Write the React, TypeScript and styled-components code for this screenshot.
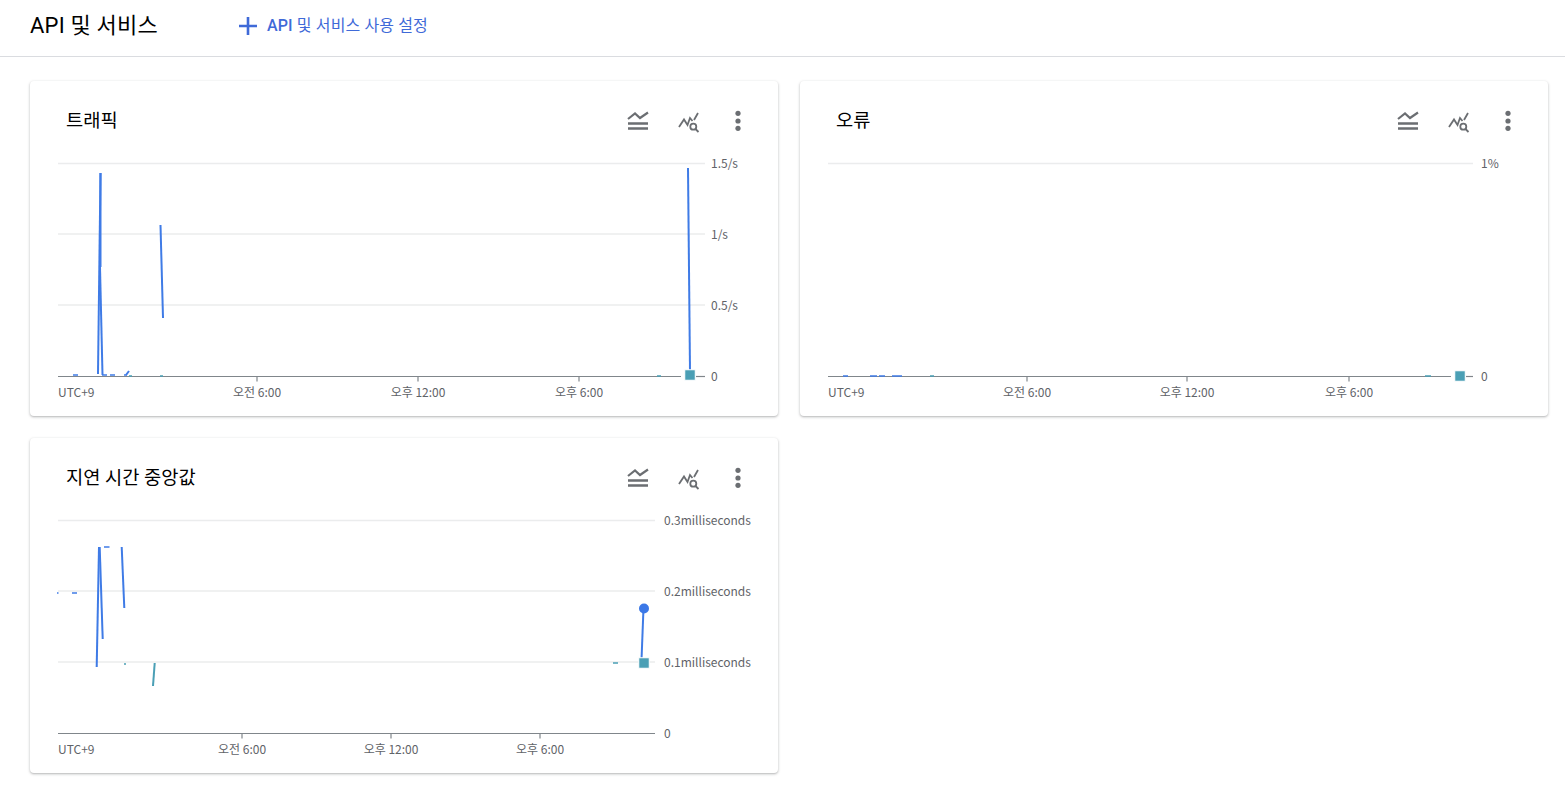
import styled, { createGlobalStyle } from 'styled-components';

const GlobalStyle = createGlobalStyle`
  html, body {
    margin: 0;
    background: #fff;
    font-family: Roboto, "Noto Sans CJK KR", sans-serif;
  }
`;

const Page = styled.div`
  width: 1565px;
  height: 794px;
  overflow: hidden;
`;

const TopBar = styled.header`
  display: flex;
  align-items: center;
  height: 56px;
  padding-left: 30px;
  border-bottom: 1px solid #dadce0;
`;

const PageTitle = styled.h1`
  width: 207px;
  margin: -5px 0 0;
  font-size: 22px;
  font-weight: 400;
  line-height: 28px;
  letter-spacing: 0.2px;
  color: #000;
  white-space: nowrap;
`;

const EnableButton = styled.button`
  display: flex;
  align-items: center;
  gap: 8px;
  margin-top: -4px;
  padding: 0;
  border: 0;
  background: none;
  color: #3f6ad8;
  font-family: inherit;
  font-size: 16px;
  line-height: 20px;
  letter-spacing: 0.13px;
  white-space: nowrap;
`;

const ApiWord = styled.span`
  font-weight: 500;
`;

const Grid = styled.main`
  display: grid;
  grid-template-columns: 748px 748px;
  grid-auto-rows: 335px;
  gap: 22px;
  padding: 24px 0 0 30px;
`;

const Card = styled.section`
  display: flex;
  flex-direction: column;
  border-radius: 4px;
  background: #fff;
  box-shadow: 0 1px 2px 0 rgba(60, 64, 67, 0.3), 0 1px 3px 1px rgba(60, 64, 67, 0.08);
`;

const CardHead = styled.div`
  display: flex;
  align-items: flex-start;
  height: 69px;
  padding: 25px 28px 0 36px;
  box-sizing: border-box;
`;

const CardTitle = styled.h2`
  flex: 1;
  margin: 2px 0 0;
  font-size: 18.7px;
  font-weight: 400;
  line-height: 26px;
  color: #000;
`;

const IconRow = styled.div`
  display: flex;
  gap: 26px;
`;

const IconButton = styled.button`
  display: flex;
  width: 24px;
  height: 24px;
  margin-top: 3px;
  padding: 0;
  border: 0;
  background: none;
  color: #6b6e72;
`;

const ChartSvg = styled.svg`
  display: block;
`;

const GridLine = styled.line`
  stroke: #ebeced;
  stroke-width: 1.5;
`;

const AxisLine = styled.line`
  stroke: #80868b;
  stroke-width: 1.2;
`;

const AxisLabel = styled.text`
  font-family: "Noto Sans CJK KR", sans-serif;
  font-size: 12px;
  fill: #5f6368;
`;

const SeriesLine = styled.line<{ $teal?: boolean; $faint?: boolean }>`
  stroke: ${(p) => (p.$teal ? '#4a9fb5' : '#3f7be6')};
  stroke-width: 2;
  opacity: ${(p) => (p.$faint ? 0.75 : 1)};
`;

const LatestSquare = styled.rect`
  fill: #4a9fb5;
  stroke: #fff;
  stroke-width: 1;
`;

const LatestDot = styled.circle`
  fill: #3b78e7;
`;

type Seg = { x1: number; y1: number; x2: number; y2: number; teal?: boolean; faint?: boolean };

type ChartProps = {
  yTicks: { y: number; label: string; axis?: boolean }[];
  xTicks: { x: number; label: string }[];
  right: number;
  labelX: number;
  gapFrom?: number;
  gapTo?: number;
  segs: Seg[];
  square: { x: number; y: number };
  dot?: { x: number; y: number };
};

const mark = (x1: number, x2: number, y: number, teal = false): Seg => ({ x1, y1: y, x2, y2: y, teal, faint: true });

function Chart({ yTicks, xTicks, right, labelX, gapFrom, gapTo, segs, square, dot }: ChartProps) {
  const axisY = 226.5;
  return (
    <ChartSvg width="748" height="266" viewBox="0 0 748 266">
      {yTicks.map((t) => (
        <g key={t.label}>
          {!t.axis && <GridLine x1="28" x2={right} y1={t.y} y2={t.y} />}
          <AxisLabel x={labelX} y={t.y + 4.5}>{t.label}</AxisLabel>
        </g>
      ))}
      <AxisLine x1="28" x2={gapFrom ?? right} y1={axisY} y2={axisY} />
      {gapTo && <AxisLine x1={gapTo} x2={right} y1={axisY} y2={axisY} />}
      <AxisLabel x="28" y="246.5">UTC+9</AxisLabel>
      {xTicks.map((t) => (
        <g key={t.label}>
          <AxisLine x1={t.x} x2={t.x} y1={axisY} y2={axisY + 5} />
          <AxisLabel x={t.x} y="246.5" textAnchor="middle">{t.label}</AxisLabel>
        </g>
      ))}
      {segs.map((s, i) => (
        <SeriesLine key={i} x1={s.x1} y1={s.y1} x2={s.x2} y2={s.y2} $teal={s.teal} $faint={s.faint} />
      ))}
      {dot && <LatestDot cx={dot.x} cy={dot.y} r="5" />}
      <LatestSquare x={square.x - 5.25} y={square.y - 5.25} width="10.5" height="10.5" />
    </ChartSvg>
  );
}

function AreaIcon() {
  return (
    <svg width="24" height="24" viewBox="0 0 24 24" fill="none" stroke="currentColor" strokeWidth="2.2">
      <path d="M2 10 9 4.5l5 4.5 8-5.5" />
      <path d="M2 14.5h20M2 19.5h20" strokeWidth="2.6" />
    </svg>
  );
}

function ExploreIcon() {
  return (
    <svg width="24" height="24" viewBox="0 0 24 24" fill="none" stroke="currentColor" strokeWidth="1.8">
      <path d="M3 18 8 10.5l3.5 5.5 2.5-7 2.5 3M18 11l4-7" />
      <circle cx="17.3" cy="17.7" r="3" />
      <path d="m19.5 20 3 3" />
    </svg>
  );
}

function MoreIcon() {
  return (
    <svg width="24" height="24" viewBox="0 0 24 24" fill="currentColor">
      <circle cx="12" cy="4.3" r="2.6" />
      <circle cx="12" cy="12" r="2.6" />
      <circle cx="12" cy="19.3" r="2.6" />
    </svg>
  );
}

function MetricCard({ title, chart }: { title: string; chart: ChartProps }) {
  return (
    <Card>
      <CardHead>
        <CardTitle>{title}</CardTitle>
        <IconRow>
          <IconButton><AreaIcon /></IconButton>
          <IconButton><ExploreIcon /></IconButton>
          <IconButton><MoreIcon /></IconButton>
        </IconRow>
      </CardHead>
      <Chart {...chart} />
    </Card>
  );
}

const traffic: ChartProps = {
  yTicks: [
    { y: 13.5, label: '1.5/s' },
    { y: 84, label: '1/s' },
    { y: 155, label: '0.5/s' },
    { y: 226, label: '0', axis: true },
  ],
  xTicks: [
    { x: 227, label: '오전 6:00' },
    { x: 388, label: '오후 12:00' },
    { x: 549, label: '오후 6:00' },
  ],
  right: 675,
  labelX: 681,
  gapFrom: 651,
  gapTo: 666,
  segs: [
    { x1: 68, y1: 224, x2: 70.5, y2: 23 },
    { x1: 70.5, y1: 23, x2: 70.5, y2: 117 },
    { x1: 70, y1: 117, x2: 72.5, y2: 225 },
    { x1: 130.5, y1: 75, x2: 133, y2: 168 },
    { x1: 658, y1: 18, x2: 660, y2: 220 },
    mark(43, 48, 225),
    mark(72, 77, 225),
    mark(80, 85, 225),
    mark(94, 97, 225),
    { x1: 96, y1: 225, x2: 99, y2: 221 },
    mark(99, 102, 226, true),
    mark(130, 133, 226, true),
    mark(627, 631, 226, true),
  ],
  square: { x: 660, y: 225 },
};

const errors: ChartProps = {
  yTicks: [
    { y: 13.5, label: '1%' },
    { y: 226, label: '0', axis: true },
  ],
  xTicks: [
    { x: 227, label: '오전 6:00' },
    { x: 387, label: '오후 12:00' },
    { x: 549, label: '오후 6:00' },
  ],
  right: 673,
  labelX: 681,
  gapFrom: 651,
  gapTo: 666,
  segs: [
    mark(43, 48, 226),
    mark(70, 77, 226),
    mark(79, 85, 226),
    mark(92, 102, 226),
    mark(130, 134, 226, true),
    mark(625, 631, 226, true),
  ],
  square: { x: 660, y: 226 },
};

const latency: ChartProps = {
  yTicks: [
    { y: 13.5, label: '0.3milliseconds' },
    { y: 84, label: '0.2milliseconds' },
    { y: 155, label: '0.1milliseconds' },
    { y: 226, label: '0', axis: true },
  ],
  xTicks: [
    { x: 212, label: '오전 6:00' },
    { x: 361, label: '오후 12:00' },
    { x: 510, label: '오후 6:00' },
  ],
  right: 625,
  labelX: 634,
  segs: [
    { x1: 66.7, y1: 160, x2: 69, y2: 40 },
    { x1: 69.7, y1: 40, x2: 72.7, y2: 132 },
    { x1: 91.7, y1: 40, x2: 94.3, y2: 101 },
    { x1: 613.5, y1: 101, x2: 611.5, y2: 153 },
    { x1: 124.7, y1: 156, x2: 123, y2: 179, teal: true },
    mark(74, 79.5, 40),
    mark(42, 47, 86),
    mark(27, 28.5, 86),
    mark(94, 96, 157, true),
    mark(583, 588, 156, true),
  ],
  square: { x: 614, y: 156 },
  dot: { x: 614, y: 101.5 },
};

export default function App() {
  return (
    <Page>
      <GlobalStyle />
      <TopBar>
        <PageTitle>API 및 서비스</PageTitle>
        <EnableButton>
          <svg width="22" height="22" viewBox="0 0 22 22" fill="none" stroke="currentColor" strokeWidth="2.6">
            <path d="M11 2v18M2 11h18" />
          </svg>
          <span><ApiWord>API</ApiWord> 및 서비스 사용 설정</span>
        </EnableButton>
      </TopBar>
      <Grid>
        <MetricCard title="트래픽" chart={traffic} />
        <MetricCard title="오류" chart={errors} />
        <MetricCard title="지연 시간 중앙값" chart={latency} />
      </Grid>
    </Page>
  );
}
